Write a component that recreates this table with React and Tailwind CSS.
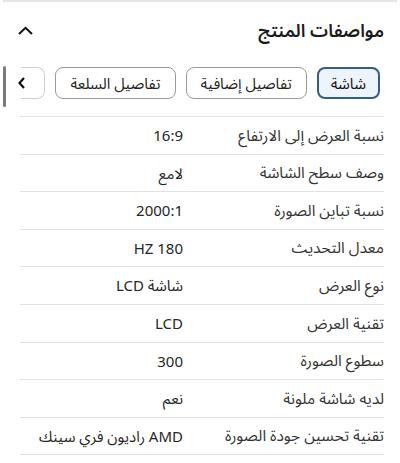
import React from 'react';

export default function App() {
  const tabs = ['شاشة', 'تفاصيل إضافية', 'تفاصيل السلعة'];

  // specs table rows
  const specs = [
    ['نسبة العرض إلى الارتفاع', '16:9'],
    ['وصف سطح الشاشة', 'لامع'],
    ['نسبة تباين الصورة', '2000:1'],
    ['معدل التحديث', 'HZ 180'],
    ['نوع العرض', 'شاشة LCD'],
    ['تقنية العرض', 'LCD'],
    ['سطوع الصورة', '300'],
    ['لديه شاشة ملونة', 'نعم'],
    ['تقنية تحسين جودة الصورة', 'AMD راديون فري سينك'],
  ];

  return (
    <div
      dir="rtl"
      className="w-[400px] h-[463px] bg-white overflow-hidden relative text-[#222]"
      style={{ fontFamily: '"Noto Sans", "Noto Sans Arabic", "DejaVu Sans", sans-serif' }}
    >
      <div className="h-[2px] mx-[3px] bg-[#e6e6e6]" />

      {/* header */}
      <div className="flex items-center justify-between pr-4 pl-[18px] mt-[11px] h-[34px]">
        <h2 className="text-[18px] font-semibold text-[#1a1a1a] leading-none">مواصفات المنتج</h2>
        <svg width="15" height="9" viewBox="0 0 15 9">
          <path d="M1 8 L7.5 1.8 L14 8" fill="none" stroke="#111" strokeWidth="2" />
        </svg>
      </div>

      {/* tabs */}
      <div className="relative mt-[20px] flex gap-[10px] pr-[20px] h-[32px]">
        {tabs.map((t, i) => (
          <button
            key={i}
            className={`shrink-0 h-[32px] rounded-[8px] text-[15px] leading-none whitespace-nowrap ${
              i === 0
                ? 'px-[12px] border-[2px] border-[#355d86] bg-[#eef4fb] text-[#111]'
                : 'px-[14px] border border-[#9a9a9a] bg-white text-[#222]'
            }`}
          >
            {t}
          </button>
        ))}
        <div className="relative shrink-0 w-[24px] h-[32px] rounded-r-[8px] border-y border-r border-l-0 border-[#d0d0d0] bg-white">
          <svg width="8" height="12" viewBox="0 0 8 12" className="absolute left-[-3px] top-[9px]">
            <path d="M6 1 L1.5 6 L6 11" fill="none" stroke="#111" strokeWidth="2.2" />
          </svg>
        </div>
        <div className="absolute left-[3px] top-[-1px] w-[3px] h-[41px] bg-[#7a7a7a] rounded-sm" />
      </div>

      {/* specs table */}
      <div className="mt-[17px] mr-[16px] ml-[20px] border-t border-[#e2e2e2]">
        {specs.map(([label, value], i) => (
          <div
            key={i}
            className="grid grid-cols-[201px_1fr] items-center h-[37.6px] border-b border-[#e2e2e2]"
          >
            <span className="text-[15.5px] text-[#333] whitespace-nowrap">{label}</span>
            <span className="text-[15px] text-[#262626] whitespace-nowrap">{value}</span>
          </div>
        ))}
      </div>
    </div>
  );
}
